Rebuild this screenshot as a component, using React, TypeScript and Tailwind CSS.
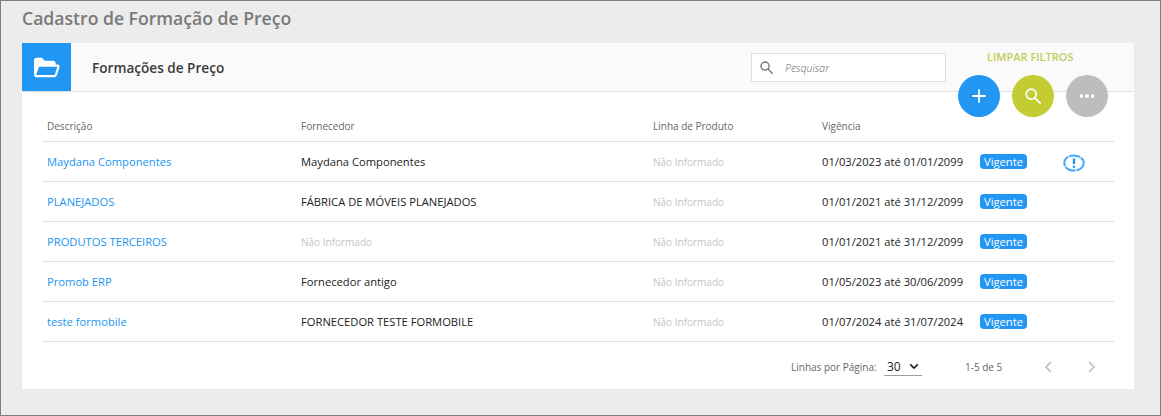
import React from "react";

const rows = [
  { d: "Maydana Componentes", f: "Maydana Componentes", v: "01/03/2023 até 01/01/2099", warn: true },
  { d: "PLANEJADOS", f: "FÁBRICA DE MÓVEIS PLANEJADOS", v: "01/01/2021 até 31/12/2099" },
  { d: "PRODUTOS TERCEIROS", f: "", v: "01/01/2021 até 31/12/2099" },
  { d: "Promob ERP", f: "Fornecedor antigo", v: "01/05/2023 até 30/06/2099" },
  { d: "teste formobile", f: "FORNECEDOR TESTE FORMOBILE", v: "01/07/2024 até 31/07/2024" },
];

const grid = "grid grid-cols-[254px_352px_169px_158px_83px_56px] pl-[5px] items-center";

function SearchIcon({ className, stroke }: { className: string; stroke: string }) {
  return (
    <svg viewBox="0 0 16 16" className={className} fill="none" stroke={stroke} strokeWidth="1.7">
      <circle cx="6.2" cy="6.2" r="5" />
      <path d="M9.9 9.9l5.2 5.2" strokeLinecap="round" />
    </svg>
  );
}

export default function App() {
  return (
    <div className="w-[1161px] h-[416px] bg-[#ececec] border border-[#7f7f7f] pl-[21px] pr-[26px] overflow-hidden font-['Open_Sans',sans-serif]">
      <h1 className="h-[42px] pt-[5px] text-[17.6px] leading-[24px] font-semibold text-[#7a7a7a]">Cadastro de Formação de Preço</h1>
      <div className="relative bg-white h-[346px]">
        <div className="h-[49px] flex items-center bg-[#fafafa] border-b border-[#e0e0e0]">
          <div className="w-[49px] h-[48px] bg-[#2196f3] flex items-center justify-center">
            <svg viewBox="0 0 28 22" className="w-[27px] h-[21px]" fill="none" stroke="#fff" strokeWidth="2.2" strokeLinejoin="round">
              <path d="M2 18V3.5C2 2.6 2.6 2 3.5 2H9l2.5 3H21c.9 0 1.5.6 1.5 1.5V8" fill="#fff" />
              <path d="M6 9h19.5c.8 0 1.2.6 1 1.3l-2.6 8.2c-.3.9-.9 1.5-1.8 1.5H3.5c-1 0-1.6-.8-1.3-1.7L5 10c.2-.6.5-1 1-1z" fill="#2196f3" />
            </svg>
          </div>
          <div className="ml-[21px] pt-[2px] w-[132px] whitespace-nowrap text-[13.6px] font-semibold text-[#3a3a3a]">Formações de Preço</div>
          <div className="ml-[527px] w-[195px] h-[29px] bg-white border border-[#e0e0e0] flex items-center pl-[8px]">
            <SearchIcon className="w-[13px] h-[13px]" stroke="#757575" />
            <span className="ml-[12px] pt-[3px] text-[10.5px] italic font-light text-[#666]">Pesquisar</span>
          </div>
        </div>

        <div className="absolute left-[936px] top-[32px] w-[150px]">
          <div className="absolute left-[29px] -top-[25px] text-[11px] leading-[14px] font-semibold text-[#c3cc5a] whitespace-nowrap">LIMPAR FILTROS</div>
          <div className="flex gap-[12px]">
            <div className="w-[42px] h-[42px] rounded-full bg-[#2196f3] flex items-center justify-center">
              <svg viewBox="0 0 14 14" className="w-[14px] h-[14px]" stroke="#fff" strokeWidth="1.8" strokeLinecap="round">
                <path d="M7 1v12M1 7h12" />
              </svg>
            </div>
            <div className="w-[42px] h-[42px] rounded-full bg-[#c3cc33] flex items-center justify-center">
              <SearchIcon className="w-[16px] h-[16px]" stroke="#fff" />
            </div>
            <div className="w-[42px] h-[42px] rounded-full bg-[#bdbdbd] flex items-center justify-center gap-[2px]">
              <span className="w-[3.5px] h-[3.5px] rounded-full bg-white" />
              <span className="w-[3.5px] h-[3.5px] rounded-full bg-white" />
              <span className="w-[3.5px] h-[3.5px] rounded-full bg-white" />
            </div>
          </div>
        </div>

        <div className="mx-[20px] mt-[19px]">
          <div className={`${grid} h-[31px] border-b border-[#e0e0e0] text-[10px] font-medium text-[#666]`}>
            <div className="pt-[1px]">Descrição</div>
            <div className="pt-[1px]">Fornecedor</div>
            <div className="pt-[1px]">Linha de Produto</div>
            <div className="pt-[1px]">Vigência</div>
          </div>
          {rows.map((r) => (
            <div key={r.d} className={`${grid} h-[40px] border-b border-[#e0e0e0] text-[11.2px]`}>
              <div className="pt-[2px] text-[#2196f3]">{r.d}</div>
              {r.f ? <div className="pt-[2px] text-[#222]">{r.f}</div> : <div className="pt-[2px] text-[10px] text-[#c4c4c4]">Não Informado</div>}
              <div className="pt-[2px] text-[10px] text-[#c4c4c4]">Não Informado</div>
              <div className="pt-[2px] text-[#222]">{r.v}</div>
              <div>
                <span className="block h-[15px] w-[47px] rounded-[4px] bg-[#2196f3] text-white text-[11.2px] leading-[15px] font-medium text-center">Vigente</span>
              </div>
              <div className="pt-[3px]">
                {r.warn && (
                  <svg viewBox="0 0 22 18" className="w-[22px] h-[18px]" fill="none">
                    <ellipse cx="11" cy="9" rx="9.7" ry="7.6" stroke="#42a5f5" strokeWidth="2" strokeDasharray="11 1" />
                    <path d="M11 4.5v5.5" stroke="#2196f3" strokeWidth="2.4" />
                    <circle cx="11" cy="12.8" r="1.3" fill="#2196f3" />
                  </svg>
                )}
              </div>
            </div>
          ))}
          <div className="h-[47px] flex items-center text-[10px] font-medium text-[#666]">
            <div className="ml-[749px] w-[85px] whitespace-nowrap pt-[4px]">Linhas por Página:</div>
            <div className="ml-[8px] mt-[3px] w-[38px] h-[17px] border-b border-[#9e9e9e] flex items-center pl-[3px] text-[12px] text-[#222]">
              <span>30</span>
              <svg viewBox="0 0 12 8" className="ml-[8px] w-[10px] h-[7px]" fill="none" stroke="#222" strokeWidth="2">
                <path d="M1.5 1.5L6 6l4.5-4.5" />
              </svg>
            </div>
            <div className="ml-[43px] w-[37px] whitespace-nowrap pt-[4px]">1-5 de 5</div>
            <svg viewBox="0 0 8 12" className="ml-[42px] mt-[3px] w-[8px] h-[12px]" fill="none" stroke="#bdbdbd" strokeWidth="1.6">
              <path d="M7 1L2 6l5 5" />
            </svg>
            <svg viewBox="0 0 8 12" className="ml-[36px] mt-[3px] w-[8px] h-[12px]" fill="none" stroke="#bdbdbd" strokeWidth="1.6">
              <path d="M1 1l5 5-5 5" />
            </svg>
          </div>
        </div>
      </div>
    </div>
  );
}
